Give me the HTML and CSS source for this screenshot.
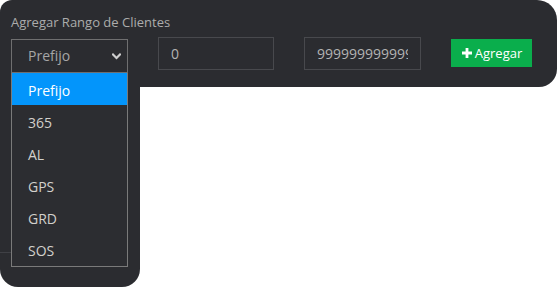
FILE: index.html
```html
<!DOCTYPE html>
<html lang="es">
<head>
<meta charset="utf-8">
<title>Agregar Rango de Clientes</title>
<link rel="stylesheet" href="styles.css">
</head>
<body>
<div class="window">
  <section class="panel">
    <h1 class="title">Agregar Rango de Clientes</h1>
    <div class="row">
      <div class="select">
        <span class="select-value">Prefijo</span>
        <svg class="chevron" width="9" height="7" viewBox="0 0 9 7" aria-hidden="true"><polyline points="1,1.5 4.5,5 8,1.5" fill="none" stroke="#cfcfcf" stroke-width="2.2" stroke-linecap="square"/></svg>
        <ul class="menu">
          <li class="option active">Prefijo</li>
          <li class="option">365</li>
          <li class="option">AL</li>
          <li class="option">GPS</li>
          <li class="option">GRD</li>
          <li class="option">SOS</li>
        </ul>
      </div>
      <input class="field" type="text" value="0">
      <input class="field" type="text" value="999999999999999">
      <button class="btn" type="button"><svg class="plus" width="10" height="10" viewBox="0 0 10 10" aria-hidden="true"><path d="M3.6 0h2.8v3.6H10v2.8H6.4V10H3.6V6.4H0V3.6h3.6z" fill="#fff"/></svg>Agregar</button>
    </div>
  </section>
  <div class="tail"><div class="rule"></div></div>
</div>
</body>
</html>
```

FILE: styles.css
```css
* { box-sizing: border-box; }
html, body { margin: 0; padding: 0; background: #ffffff; }
body { font-family: "Open Sans", "Liberation Sans", sans-serif; width: 557px; height: 287px; overflow: hidden; }

.window { display: flex; flex-direction: column; }

.panel {
  width: 557px;
  height: 87px;
  background: #2b2c30;
  border-radius: 12px 20px 18px 0;
  padding: 13px 0 0 11px;
}

.title {
  margin: 0;
  font-size: 13px;
  line-height: 18px;
  font-weight: 400;
  color: #acacac;
}

.row {
  display: flex;
  align-items: flex-start;
  gap: 30px;
  margin-top: 6px;
}

.select {
  position: relative;
  width: 117px;
  height: 34px;
  margin-top: 2px;
  border: 1px solid #6f6f70;
  display: flex;
  align-items: center;
  justify-content: space-between;
  padding: 0 6px 0 16px;
}

.select-value {
  font-size: 14px;
  line-height: 32px;
  color: #a6a6a6;
}

.chevron { display: block; margin-top: 1px; }

.menu {
  position: absolute;
  top: 33px;
  left: -1px;
  width: 117px;
  margin: 0;
  padding: 0 0 1px;
  list-style: none;
  background: #2c2d31;
  border: 1px solid #7a7a7a;
  border-top: none;
  z-index: 2;
}

.option {
  height: 32px;
  line-height: 28px;
  padding: 4px 0 0 16px;
  font-size: 14px;
  color: #d2d0cc;
}

.option.active { background: #0395fb; color: #ffffff; }

.field {
  width: 116px;
  height: 33px;
  margin: 0;
  padding: 0 12px;
  background: transparent;
  border: 1px solid #48494d;
  border-radius: 0;
  font-family: "Open Sans", "Liberation Sans", sans-serif;
  font-size: 14px;
  color: #b3b3b3;
  outline: none;
}

.field + .field { width: 117px; }

.btn {
  width: 81px;
  height: 28px;
  margin-top: 2px;
  padding: 0 0 0 1px;
  border: none;
  border-radius: 0;
  background: #0aae4c;
  color: #ffffff;
  font-family: "Open Sans", "Liberation Sans", sans-serif;
  font-size: 13px;
  display: flex;
  align-items: center;
  justify-content: center;
  gap: 3px;
}

.plus { display: block; }

.tail {
  width: 140px;
  height: 200px;
  background: #2b2c30;
  border-radius: 0 0 18px 18px;
  padding-top: 165px;
}

.rule {
  width: 11px;
  height: 1px;
  background: #3f4045;
}
```
